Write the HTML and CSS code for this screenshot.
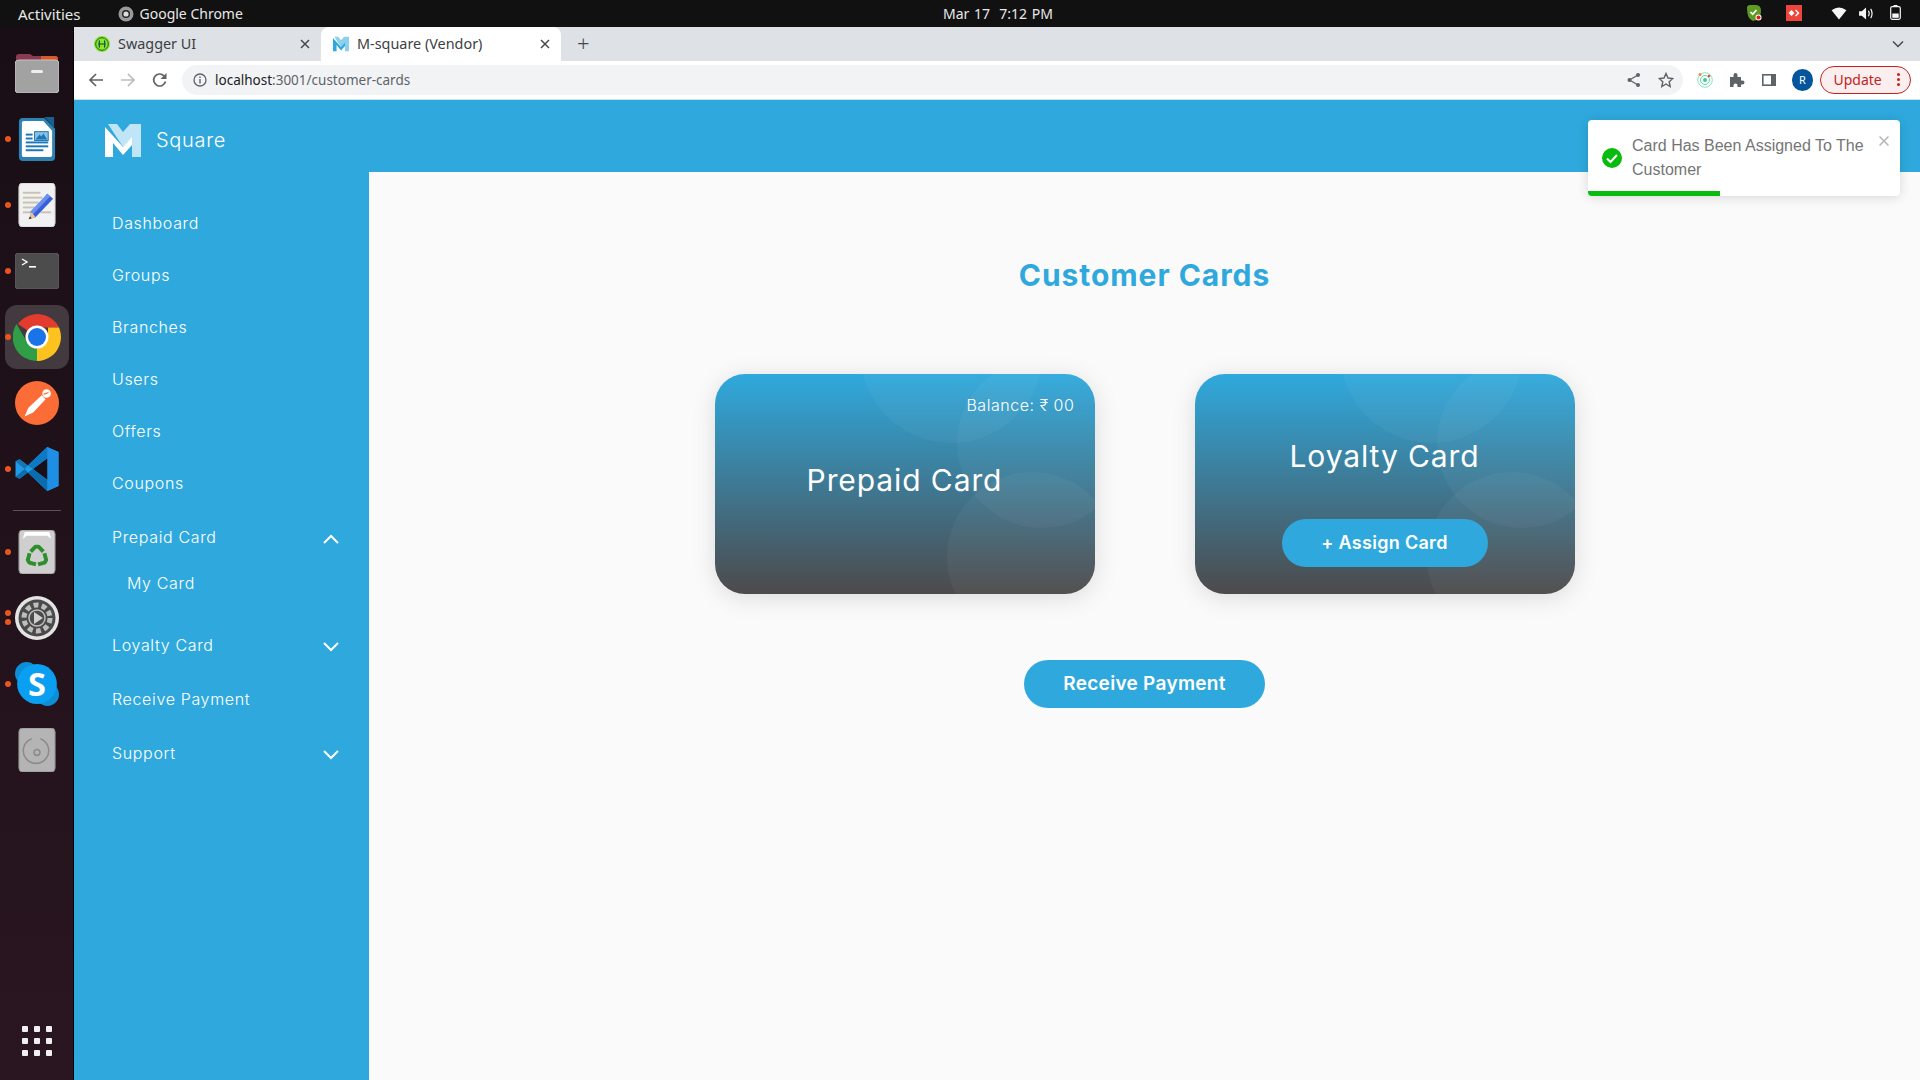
FILE: index.html
```html
<!DOCTYPE html>
<html lang="en">
<head>
<meta charset="utf-8">
<title>M-square (Vendor)</title>
<link rel="stylesheet" href="styles.css">
</head>
<body>
<header class="topbar">
  <div class="top-left">
    <span class="activities">Activities</span>
    <span class="app-name">
      <svg class="i16" viewBox="0 0 16 16"><circle cx="8" cy="8" r="7.500" fill="#9a9a9a"/><circle cx="8" cy="8" r="4" fill="#222"/><circle cx="8" cy="8" r="2.600" fill="#ddd"/></svg>
      Google Chrome
    </span>
  </div>
  <div class="clock">Mar 17&nbsp;&nbsp;7:12 PM</div>
  <div class="tray">
    <svg class="tray-shield" viewBox="0 0 16 16"><path d="M1 3q0-3 3-3h6q5 0 5 6 0 9-8 10Q1 14 1 3z" fill="#5f9a24"/><path d="M4.500 7l2.200 2.200L10.500 5" fill="none" stroke="#fff" stroke-width="1.700"/><circle cx="12.500" cy="12.500" r="3" fill="#fff"/><circle cx="12.500" cy="12.500" r="2" fill="#e21b1b"/></svg>
    <svg class="tray-desk" viewBox="0 0 16 16"><rect width="16" height="16" fill="#ef443b"/><path d="M5.500 5L8.500 8 5.500 11 2.500 8zM10 4.500L13.500 8 10 11.500 9 10.500 11.500 8 9 5.500z" fill="#fff"/></svg>
    <svg class="tray-wifi" viewBox="0 0 16 14"><path d="M0 3.500Q8-2.500 16 3.500L8 13.500z" fill="#f5f5f5"/></svg>
    <svg class="tray-vol" viewBox="0 0 16 14"><path d="M0 4.500h3L7.500.5v13L3 9.500H0z" fill="#f5f5f5"/><path d="M10 4q1.800 3 0 6M12.500 2q3 5 0 10" fill="none" stroke="#f5f5f5" stroke-width="1.300"/></svg>
    <svg class="tray-bat" viewBox="0 0 11 15"><rect x=".7" y="1.700" width="9.600" height="12.600" rx="1.500" fill="none" stroke="#f5f5f5" stroke-width="1.200"/><rect x="3.500" y="0" width="4" height="2" fill="#f5f5f5"/><rect x="2.300" y="8.500" width="6.400" height="4.300" fill="#f5f5f5"/></svg>
  </div>
</header>

<div class="desktop">
  <nav class="dock">
    <div class="dock-item">
      <svg class="dock-icon" viewBox="0 0 44 40"><path d="M1 4q0-3 3-3h11l3 2h22q3 0 3 3v10H1z" fill="#8c3a52"/><path d="M26 3h14q3 0 3 3v8H26z" fill="#d9582c"/><rect y="7" width="44" height="33" rx="4" fill="#a2a2a2" stroke="#c4c4c4"/><rect x="16" y="17" width="12" height="3" rx="1.500" fill="#eee"/></svg>
    </div>
    <div class="dock-item has-dot">
      <svg class="dock-icon" viewBox="0 0 37 45"><path d="M4 1h22l11 11v29q0 4-4 4H4q-4 0-4-4V5q0-4 4-4z" fill="#2c82b4"/><path d="M26 0h10v11z" fill="#17618f"/><path d="M5 4h20l9 10v24q0 3-3 3H5q-2 0-2-3V6q0-2 2-2z" fill="#fff"/><g fill="#1a77b8"><rect x="7" y="17" width="7" height="2"/><rect x="7" y="21" width="7" height="2"/><rect x="7" y="25" width="23" height="2"/><rect x="7" y="29" width="23" height="2"/><rect x="7" y="33" width="18" height="2"/><rect x="16" y="15" width="14" height="9" fill="#8cc0e0" stroke="#1a77b8"/></g><path d="M17 23l4-5 2 2 2-3 4 6z" fill="#1a77b8"/></svg>
    </div>
    <div class="dock-item has-dot">
      <svg class="dock-icon" viewBox="0 0 37 45"><rect width="37" height="45" rx="4" fill="#f1f1f1" stroke="#ccc"/><g fill="#c9c3b5"><rect x="4" y="9" width="18" height="2"/><rect x="4" y="14" width="20" height="2"/><rect x="4" y="19" width="16" height="2"/><rect x="4" y="24" width="12" height="2"/><rect x="22" y="29" width="11" height="2"/><rect x="4" y="29" width="8" height="2"/></g><path d="M29 11l6 5-18 19-7 2 3-7z" fill="#3560d8"/><path d="M29 11l3 2.500-18 19-3-2.500z" fill="#6d90ee"/><path d="M13 30l4 5-7 2z" fill="#eec48e"/><path d="M10 37l1.500-3 1.500 2z" fill="#333"/></svg>
    </div>
    <div class="dock-item has-dot">
      <svg class="dock-icon" viewBox="0 0 44 36"><rect width="44" height="36" rx="4" fill="#4c4c4c" stroke="#5e5e5e"/><path d="M7 6l5 3-5 3" fill="none" stroke="#fff" stroke-width="1.400"/><rect x="14" y="13" width="7" height="1.600" fill="#fff"/></svg>
    </div>
    <div class="dock-item has-dot active">
      <svg class="dock-icon" viewBox="0 0 48 48"><path d="M24 24L5 11A24 24 0 0 1 46 14.500H24z" fill="#e33b2e"/><path d="M24 24H46A24 24 0 0 1 24 48z" fill="#fcc31e"/><path d="M24 48A24 24 0 0 1 3.500 11L14 29l10 1z" fill="#2f9e46"/><path d="M46 14.500A24 24 0 0 1 24 48l11-19V14.500z" fill="#fcc31e"/><circle cx="24" cy="24" r="11.500" fill="#fff"/><circle cx="24" cy="24" r="9" fill="#1a73e8"/></svg>
    </div>
    <div class="dock-item">
      <svg class="dock-icon" viewBox="0 0 46 46"><circle cx="23" cy="23" r="23" fill="#fb6c36"/><path d="M10 37l4-9 14-13 4 4-13 14z" fill="#fff"/><circle cx="33" cy="13" r="4.500" fill="#fff"/><path d="M30 14l5-2" stroke="#fb6c36" stroke-width="1.200"/></svg>
    </div>
    <div class="dock-item has-dot">
      <svg class="dock-icon" viewBox="0 0 42 43"><path d="M31 0l11 5v33l-11 5L12 25 4 31 0 29V14l4-2 8 6z" fill="#1f9ce8"/><path d="M31 0l11 5v33l-11 5z" fill="#1f8fe6"/><path d="M31 11v21L17 21.500z" fill="#1a0f17"/><path d="M4 12l8 6-3 3.500L0 14z" fill="#1673b5"/><path d="M0 29l9-7.500 3 3.500-8 6z" fill="#0f6cae"/><path d="M12 18L31 0v11L17 21.500z" fill="#0f78c2"/><path d="M12 25l19 18V32L17 21.500z" fill="#0c6cb0"/></svg>
    </div>
    <div class="dock-sep"></div>
    <div class="dock-item has-dot">
      <svg class="dock-icon" viewBox="0 0 37 45"><rect width="37" height="45" rx="4" fill="#cfcfcf" stroke="#8a8a8a"/><path d="M4 9l2-7h25l2 7-4-3H8z" fill="#fff"/><g fill="none" stroke="#2d8e2d" stroke-width="4" stroke-linejoin="round"><path d="M12 22l5-5h3l5 5"/><path d="M12 22l5-5h3l5 5" transform="rotate(120 18.500 27)"/><path d="M12 22l5-5h3l5 5" transform="rotate(240 18.500 27)"/></g></svg>
    </div>
    <div class="dock-item has-dot has-two">
      <svg class="dock-icon" viewBox="0 0 44 44"><circle cx="22" cy="22" r="22" fill="#e4e4e4"/><circle cx="22" cy="22" r="18.500" fill="#4a4a4a"/><circle cx="22" cy="22" r="13" fill="none" stroke="#bdbdbd" stroke-width="5" stroke-dasharray="5 3.200"/><circle cx="22" cy="22" r="8" fill="#4a4a4a" stroke="#bdbdbd" stroke-width="1.500"/><path d="M19 16l9 6-9 6z" fill="#cfcfcf"/></svg>
    </div>
    <div class="dock-item has-dot">
      <svg class="dock-icon" viewBox="0 0 42 42"><circle cx="11" cy="11" r="11" fill="#0d8fd8"/><circle cx="31" cy="31" r="11" fill="#0d8fd8"/><circle cx="21" cy="21" r="19" fill="#0a9ff0"/><text class="skype-s" x="21" y="32" text-anchor="middle">S</text></svg>
    </div>
    <div class="dock-item">
      <svg class="dock-icon" viewBox="0 0 37 45"><rect width="37" height="45" rx="4" fill="#b4b4b4" stroke="#8e8e8e"/><path d="M22 11a13 13 0 1 1-9 0" fill="none" stroke="#8b8b8b" stroke-width="1.600"/><circle cx="18.500" cy="25" r="3" fill="none" stroke="#8b8b8b" stroke-width="1.600"/></svg>
    </div>
    <div class="dock-grid">
      <i></i><i></i><i></i><i></i><i></i><i></i><i></i><i></i><i></i>
    </div>
  </nav>

  <div class="browser">
    <div class="tabstrip">
      <div class="tab">
        <svg class="i16" viewBox="0 0 16 16"><circle cx="8" cy="8" r="8" fill="#85ea2d"/><circle cx="8" cy="8" r="6.300" fill="none" stroke="#2c5a2c" stroke-width="1"/><path d="M5.500 4.500q-1 3.500 0 7M10.500 4.500q1 3.500 0 7M5.500 8h5" fill="none" stroke="#173647" stroke-width="1.100"/></svg>
        <span class="tab-title">Swagger UI</span>
        <svg class="tab-close" viewBox="0 0 10 10"><path d="M1 1l8 8M9 1l-8 8" stroke="#45494e" stroke-width="1.500"/></svg>
      </div>
      <div class="tab tab-active">
        <svg class="i16" viewBox="0 0 36 33"><polygon points="3,0 12,0 18,8 25,0 36,0 36,33 27,33 27,14 18,23" fill="#8dd0ee"/><polygon points="0,3 18,23 27,13 27,21 18,31 8,19 8,33 0,33" fill="#2fa9dd"/></svg>
        <span class="tab-title">M-square (Vendor)</span>
        <svg class="tab-close" viewBox="0 0 10 10"><path d="M1 1l8 8M9 1l-8 8" stroke="#45494e" stroke-width="1.500"/></svg>
      </div>
      <span class="newtab">+</span>
      <svg class="tabs-menu" viewBox="0 0 12 8"><path d="M1 1.500l5 5 5-5" fill="none" stroke="#45494e" stroke-width="1.500"/></svg>
    </div>

    <div class="toolbar">
      <svg class="nav-icon" viewBox="0 0 16 16"><path d="M15 8H2M8 2L2 8l6 6" fill="none" stroke="#5f6368" stroke-width="1.700"/></svg>
      <svg class="nav-icon" viewBox="0 0 16 16"><path d="M1 8h13M8 2l6 6-6 6" fill="none" stroke="#babcbe" stroke-width="1.700"/></svg>
      <svg class="nav-icon" viewBox="0 0 16 16"><path d="M13.500 9.500A6 6 0 1 1 12 3.800" fill="none" stroke="#5f6368" stroke-width="1.700"/><path d="M14.500 1v6h-6z" fill="#5f6368"/></svg>
      <div class="omnibox">
        <svg class="info" viewBox="0 0 14 14"><circle cx="7" cy="7" r="6" fill="none" stroke="#5f6368" stroke-width="1.300"/><path d="M7 6v4.500M7 3.500v1.500" stroke="#5f6368" stroke-width="1.400"/></svg>
        <span class="url"><b>localhost</b>:3001/customer-cards</span>
        <span class="omni-spacer"></span>
        <svg class="omni-icon" viewBox="0 0 16 16"><circle cx="3.500" cy="8" r="2" fill="#5f6368"/><circle cx="12" cy="3" r="2" fill="#5f6368"/><circle cx="12" cy="13" r="2" fill="#5f6368"/><path d="M12 3L3.500 8l8.500 5" fill="none" stroke="#5f6368" stroke-width="1.300"/></svg>
        <svg class="omni-icon" viewBox="0 0 16 16"><path d="M8 1.500l2 4.500 4.800.5-3.600 3.200 1 4.800L8 12l-4.200 2.500 1-4.800L1.200 6.500 6 6z" fill="none" stroke="#5f6368" stroke-width="1.400"/></svg>
      </div>
      <svg class="ext" viewBox="0 0 16 16"><circle cx="8" cy="8" r="7.300" fill="none" stroke="#7fe8c4" stroke-width="1"/><circle cx="8" cy="8" r="4.500" fill="none" stroke="#5fd8a8" stroke-width="1"/><circle cx="8" cy="8" r="2" fill="#4ac890"/><circle cx="3" cy="2.500" r="1.500" fill="#f08a3c"/><circle cx="12" cy="4" r="1.300" fill="#e8503c"/></svg>
      <svg class="ext" viewBox="0 0 16 16"><path d="M1 5h3.500V3a2 2 0 0 1 4 0v2H12v3.500h1.500a2 2 0 0 1 0 4H12V15H8.500v-1.500a2 2 0 0 0-4 0V15H1z" fill="#5f6368"/></svg>
      <svg class="ext" viewBox="0 0 16 16"><rect x="1.800" y="2.800" width="12.400" height="10.400" fill="none" stroke="#5f6368" stroke-width="1.600"/><rect x="10" y="3" width="4" height="10" fill="#5f6368"/></svg>
      <span class="avatar">R</span>
      <div class="update">Update <span class="kebab"><i></i><i></i><i></i></span></div>
    </div>

    <div class="app">
      <header class="app-header">
        <svg class="logo" viewBox="0 0 36 33"><polygon points="3,0 12,0 18,8 25,0 36,0 36,33 27,33 27,14 18,23" fill="#bfe5f6"/><polygon points="0,3 18,23 27,13 27,21 18,31 8,19 8,33 0,33" fill="#fff"/></svg>
        <span class="brand">Square</span>
      </header>
      <div class="app-body">
        <aside class="sidebar">
          <a class="nav-link">Dashboard</a>
          <a class="nav-link">Groups</a>
          <a class="nav-link">Branches</a>
          <a class="nav-link">Users</a>
          <a class="nav-link">Offers</a>
          <a class="nav-link">Coupons</a>
          <a class="nav-link nav-tall nav-first-tall">Prepaid Card
            <svg class="chev" viewBox="0 0 16 10"><path d="M1 9l7-7 7 7" fill="none" stroke="#fff" stroke-width="2"/></svg>
          </a>
          <div class="submenu"><a class="sub-link">My Card</a></div>
          <a class="nav-link nav-tall">Loyalty Card
            <svg class="chev" viewBox="0 0 16 10"><path d="M1 1l7 7 7-7" fill="none" stroke="#fff" stroke-width="2"/></svg>
          </a>
          <a class="nav-link nav-tall">Receive Payment</a>
          <a class="nav-link nav-tall">Support
            <svg class="chev" viewBox="0 0 16 10"><path d="M1 1l7 7 7-7" fill="none" stroke="#fff" stroke-width="2"/></svg>
          </a>
        </aside>
        <main class="content">
          <h1 class="title">Customer Cards</h1>
          <div class="cards">
            <section class="card card-prepaid">
              <i class="bubble b1"></i><i class="bubble b2"></i><i class="bubble b3"></i>
              <div class="balance">Balance: ₹ 00</div>
              <h2 class="card-name">Prepaid Card</h2>
            </section>
            <section class="card card-loyalty">
              <i class="bubble b1"></i><i class="bubble b2"></i><i class="bubble b3"></i>
              <h2 class="card-name">Loyalty Card</h2>
              <button class="pill assign">+ Assign Card</button>
            </section>
          </div>
          <button class="pill receive">Receive Payment</button>
        </main>
      </div>
    </div>
  </div>
</div>

<div class="toast">
  <svg class="toast-icon" viewBox="0 0 20 20"><circle cx="10" cy="10" r="10" fill="#07bc0c"/><path d="M5 10.500l3.500 3.500L15 7" fill="none" stroke="#fff" stroke-width="2"/></svg>
  <div class="toast-text">Card Has Been Assigned To The Customer</div>
  <svg class="toast-close" viewBox="0 0 10 10"><path d="M.5.500l9 9M9.500.500l-9 9" stroke="#b4b4b4" stroke-width="1.500"/></svg>
  <div class="toast-progress"></div>
</div>
</body>
</html>
```

FILE: styles.css
```css
* { box-sizing: border-box; }
html, body { margin: 0; height: 100%; }
body {
  width: 1920px; height: 1080px; overflow: hidden;
  display: flex; flex-direction: column;
  font-family: "Inter", "Noto Sans", sans-serif;
  background: #111;
}
.i16 { width: 16px; height: 16px; flex: none; }

/* system bar */
.topbar {
  height: 27px; flex: none; background: #111; color: #e8e8e8;
  display: grid; grid-template-columns: 925px auto 1fr; align-items: center;
  font: 14px "Noto Sans", sans-serif;
  padding: 0 0 0 18px;
}
.top-left { display: flex; align-items: center; gap: 37px; }
.activities { font-size: 15px; }
.app-name { display: flex; align-items: center; gap: 6px; }
.clock { font-size: 14px; word-spacing: 1px; }
.tray { position: relative; height: 27px; }
.tray svg { position: absolute; }
.tray-shield { width: 16px; height: 16px; right: 158px; top: 5px; }
.tray-desk { width: 16px; height: 16px; right: 118px; top: 5px; }
.tray-wifi { width: 16px; height: 13px; right: 73px; top: 7px; }
.tray-vol { width: 15px; height: 13px; right: 46px; top: 7px; }
.tray-bat { width: 11px; height: 15px; right: 19px; top: 5px; }

.desktop { flex: 1; display: flex; min-height: 0; }

/* dock */
.dock {
  width: 74px; flex: none; padding-top: 13px;
  display: flex; flex-direction: column; align-items: center;
  background: linear-gradient(180deg, #190e15, #2a1620);
  border-right: 1px solid #000;
}
.dock-item {
  position: relative; width: 74px; height: 66px; flex: none;
  display: flex; align-items: center; justify-content: center;
}
.dock-icon { height: 44px; width: 44px; }
.dock-item:nth-child(1) .dock-icon { height: 40px; }
.dock-item:nth-child(4) .dock-icon { height: 36px; }
.dock-item.active .dock-icon { width: 48px; height: 48px; position: relative; }
.dock-item.active::before {
  content: ""; position: absolute; left: 5px; top: 1px; width: 64px; height: 64px;
  background: #423a3e; border-radius: 12px;
}
.dock-item.has-dot::after {
  content: ""; position: absolute; left: 5px; top: 30px; width: 6px; height: 6px;
  border-radius: 50%; background: #e95420;
}
.dock-item.has-two::after { top: 25px; box-shadow: 0 9px 0 #e95420; }
.dock-sep { width: 48px; height: 17px; flex: none; position: relative; }
.dock-sep::after {
  content: ""; position: absolute; left: 0; right: 0; top: 8px; height: 1px; background: #5a5055;
}
.skype-s { font: 700 31px "Open Sans", sans-serif; fill: #fff; }
.dock-grid {
  margin-top: auto; margin-bottom: 24px;
  display: grid; grid-template-columns: repeat(3, 6px); gap: 6px;
}
.dock-grid i { width: 6px; height: 6px; background: #f0f0f0; border-radius: 1px; }

/* chrome */
.browser { flex: 1; min-width: 0; display: flex; flex-direction: column; }
.tabstrip {
  height: 34px; flex: none; background: #dee1e6; display: flex; align-items: stretch;
  padding-left: 8px; font: 14.400px "Noto Sans", sans-serif; color: #3c4043;
}
.tab {
  width: 239px; display: flex; align-items: center; padding: 0 11px 0 12px; gap: 8px;
}
.tab-active { width: 240px; background: #fff; border-radius: 8px 8px 0 0; color: #3c4043; }
.tab-title { flex: 1; padding-bottom: 2px; }
.tab-close { width: 10px; height: 10px; flex: none; }
.newtab { font-size: 22px; font-weight: 300; margin-left: 16px; align-self: center; color: #45494e; padding-bottom: 2px; }
.tabs-menu { width: 12px; height: 8px; align-self: center; margin-left: auto; margin-right: 16px; }

.toolbar {
  height: 39px; flex: none; background: #fff; border-bottom: 1px solid #c9e3f0;
  display: flex; align-items: center; padding: 0 9px 1px 14px;
}
.nav-icon { width: 16px; height: 16px; margin-right: 16px; flex: none; }
.omnibox {
  width: 1510px; height: 30px; margin-left: -2px; background: #f1f3f4; border-radius: 15px;
  display: flex; align-items: center; padding: 0 9px 0 11px;
}
.info { width: 14px; height: 14px; }
.url { margin-left: 8px; font: 13.500px "Noto Sans", sans-serif; color: #5f6368; }
.url b { font-weight: 400; color: #202124; }
.omni-spacer { flex: 1; }
.omni-icon { width: 16px; height: 16px; margin-left: 16px; }
.ext { width: 16px; height: 16px; flex: none; margin-right: 16px; }
.omnibox + .ext { margin-left: 14px; }
.avatar {
  width: 22px; height: 22px; border-radius: 50%; background: #04559b; color: #fff;
  font: 11px "Noto Sans", sans-serif; display: flex; align-items: center; justify-content: center;
  margin-left: -1px;
}
.update {
  margin-left: 7px; width: 91px; height: 28px; border: 1px solid #c5221f; border-radius: 14px;
  background: #fbeeee; color: #c5221f; font: 400 14px "Noto Sans", sans-serif;
  display: flex; align-items: center; padding-left: 12px; justify-content: space-between; padding-right: 10px;
}
.kebab { display: flex; flex-direction: column; gap: 2px; }
.kebab i { width: 3px; height: 3px; border-radius: 50%; background: #c5221f; }

/* app */
.app { flex: 1; min-height: 0; display: flex; flex-direction: column; background: #2fa9dd; }
.app-header { height: 72px; flex: none; display: flex; align-items: center; padding: 8px 0 0 31px; }
.logo { width: 36px; height: 33px; }
.brand { margin-left: 15px; color: #fff; font-size: 20px; font-weight: 300; letter-spacing: .7px; }
.app-body { flex: 1; display: flex; min-height: 0; }
.sidebar { width: 295px; flex: none; padding-top: 25px; color: #fff; display: flex; flex-direction: column; }
.nav-link {
  height: 52px; flex: none; display: flex; align-items: center; justify-content: space-between;
  padding: 0 30px 0 38px; font-size: 16px; font-weight: 300; letter-spacing: .65px;
}
.nav-tall { height: 54px; }
.nav-first-tall { margin-top: 1px; }
.submenu { height: 54px; flex: none; padding: 0 0 16px 53px; display: flex; align-items: center; }
.sub-link { font-size: 16px; font-weight: 300; letter-spacing: .65px; }
.chev { width: 16px; height: 10px; margin-top: 4px; }

.content {
  flex: 1; background: #fafafa; display: flex; flex-direction: column; align-items: center;
  padding-top: 82px;
}
.title {
  margin: 0; height: 42px; line-height: 42px; font-size: 30px; font-weight: 700; color: #2fa9dd; letter-spacing: .95px;
}
.cards { display: flex; gap: 100px; margin-top: 78px; }
.card {
  position: relative; overflow: hidden; width: 380px; height: 220px; border-radius: 30px;
  background: linear-gradient(180deg, #2fa9dd, #4d4a4b);
  box-shadow: 0 4px 24px rgba(0,0,0,.12);
  color: #fff; display: flex; flex-direction: column; align-items: center;
}
.bubble { position: absolute; border-radius: 50%; background: rgba(255,255,255,.04); }
.b1 { width: 183px; height: 183px; left: 145px; top: -114px; }
.b2 { width: 170px; height: 170px; left: 242px; top: -16px; }
.b3 { width: 170px; height: 170px; left: 232px; top: 98px; }
.card-name { position: relative; margin: 0; font-size: 30px; font-weight: 400; letter-spacing: .9px; line-height: 40px; }
.balance { position: relative; align-self: flex-end; margin: 21px 20px 0 0; font-size: 16px; font-weight: 300; line-height: 21px; letter-spacing: .55px; }
.card-prepaid .card-name { margin-top: 44px; }
.card-loyalty .card-name { margin-top: 62px; }
.pill {
  position: relative; border: 0; border-radius: 24px; height: 48px; background: #2fa9dd; color: #fff;
  font-family: inherit; font-size: 18px; font-weight: 600; letter-spacing: .3px; padding: 0 0 2px;
}
.assign { width: 206px; margin-top: 43px; }
.receive { width: 241px; margin-top: 66px; font-size: 19px; }

/* toast */
.toast {
  position: absolute; left: 1588px; top: 120px; width: 312px; height: 76px;
  background: #fff; border-radius: 4px; box-shadow: 0 1px 10px rgba(0,0,0,.1), 0 2px 15px rgba(0,0,0,.05);
  overflow: hidden; font: 16px/24px "Liberation Sans", sans-serif; color: #757575;
}
.toast-icon { position: absolute; left: 14px; top: 28px; width: 20px; height: 20px; }
.toast-text { position: absolute; left: 44px; top: 14px; width: 240px; }
.toast-close { position: absolute; right: 11px; top: 16px; width: 10px; height: 10px; }
.toast-progress { position: absolute; left: 0; bottom: 0; width: 132px; height: 5px; background: #07bc0c; }
```
